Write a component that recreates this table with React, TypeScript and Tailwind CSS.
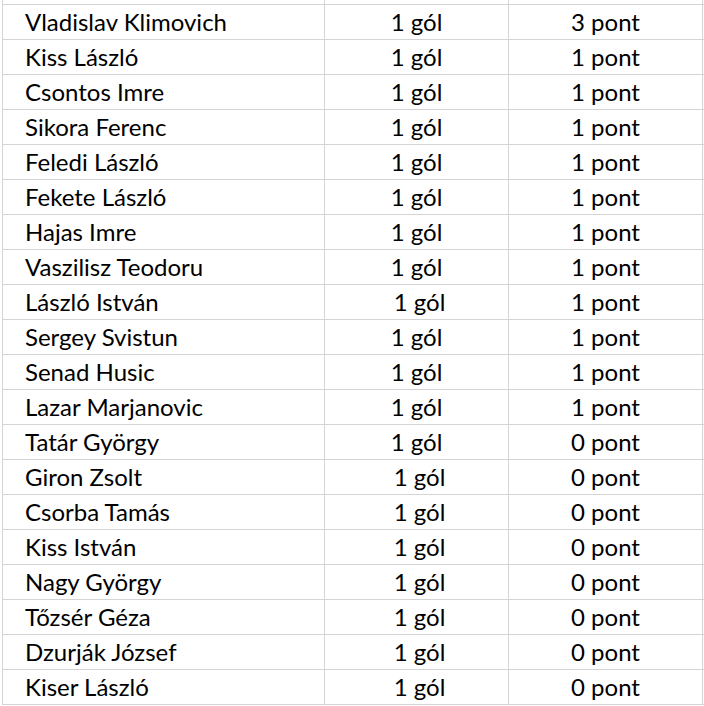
import React from "react";

type Row = { name: string; goals: string; points: string; shift?: boolean };

const rows: Row[] = [
  { name: "Vladislav Klimovich", goals: "1 gól", points: "3 pont" },
  { name: "Kiss László", goals: "1 gól", points: "1 pont" },
  { name: "Csontos Imre", goals: "1 gól", points: "1 pont" },
  { name: "Sikora Ferenc", goals: "1 gól", points: "1 pont" },
  { name: "Feledi László", goals: "1 gól", points: "1 pont" },
  { name: "Fekete László", goals: "1 gól", points: "1 pont" },
  { name: "Hajas Imre", goals: "1 gól", points: "1 pont" },
  { name: "Vaszilisz Teodoru", goals: "1 gól", points: "1 pont" },
  { name: "László István", goals: "1 gól", points: "1 pont", shift: true },
  { name: "Sergey Svistun", goals: "1 gól", points: "1 pont" },
  { name: "Senad Husic", goals: "1 gól", points: "1 pont" },
  { name: "Lazar Marjanovic", goals: "1 gól", points: "1 pont" },
  { name: "Tatár György", goals: "1 gól", points: "0 pont" },
  { name: "Giron Zsolt", goals: "1 gól", points: "0 pont", shift: true },
  { name: "Csorba Tamás", goals: "1 gól", points: "0 pont", shift: true },
  { name: "Kiss István", goals: "1 gól", points: "0 pont", shift: true },
  { name: "Nagy György", goals: "1 gól", points: "0 pont", shift: true },
  { name: "Tőzsér Géza", goals: "1 gól", points: "0 pont", shift: true },
  { name: "Dzurják József", goals: "1 gól", points: "0 pont", shift: true },
  { name: "Kiser László", goals: "1 gól", points: "0 pont", shift: true },
];

function SheetRow({ row }: { row: Row }) {
  return (
    <div className="flex h-[35px] border-b border-[#d4d4d4]">
      <div className="w-[322px] border-r border-[#d4d4d4] pl-[22px] flex items-end pb-[2px]">
        {row.name}
      </div>
      <div
        className={
          row.shift
            ? "w-[184px] border-r border-[#d4d4d4] flex items-end justify-center pb-[2px] pl-[6px]"
            : "w-[184px] border-r border-[#d4d4d4] flex items-end justify-center pb-[2px]"
        }
      >
        {row.goals}
      </div>
      <div className="w-[194px] border-r border-[#d4d4d4] flex items-end justify-center pb-[2px]">
        {row.points}
      </div>
    </div>
  );
}

export default function App() {
  return (
    <div className="w-[704px] h-[706px] bg-white overflow-hidden">
      <div
        className="ml-[2px] border-l border-[#d4d4d4] text-[24px] leading-[31px] text-black"
        style={{ fontFamily: "Lato, 'Open Sans', sans-serif" }}
      >
        {/* previous row, cut off at the top */}
        <div className="h-[5px] overflow-hidden flex flex-col justify-end">
          <div className="shrink-0">
            <SheetRow row={{ name: "", goals: "1 gól", points: "1 pont" }} />
          </div>
        </div>
        {rows.map((r) => (
          <SheetRow key={r.name} row={r} />
        ))}
      </div>
    </div>
  );
}
